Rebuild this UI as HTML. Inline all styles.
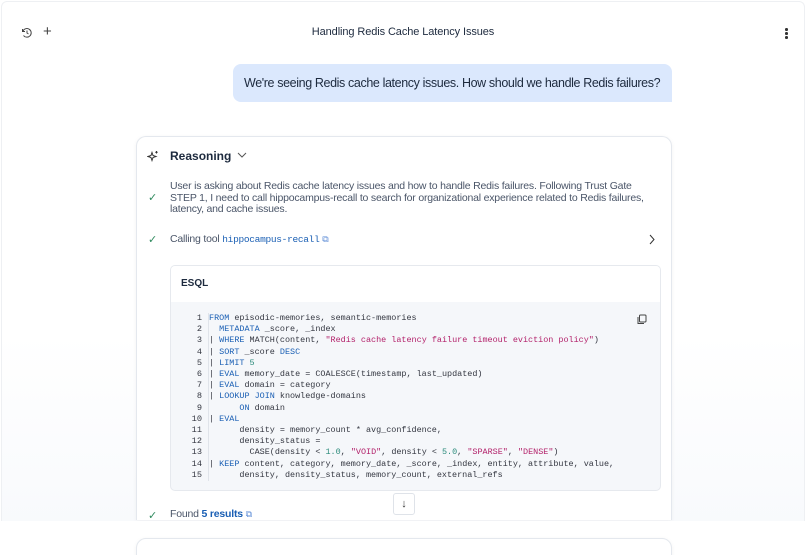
<!DOCTYPE html>
<html><head><meta charset="utf-8"><style>
*{box-sizing:border-box;margin:0;padding:0}
html,body{width:806px;height:555px;overflow:hidden}
body{background:#fff;font-family:"Liberation Sans",sans-serif;color:#1d2a3e;position:relative}
.frame{position:absolute;left:1px;top:1px;right:1px;bottom:0;border:1px solid #eef0f3;border-bottom:none;border-radius:6px 6px 0 0;background:linear-gradient(#fff 0,#fff 60%,#f7f9fc 100%)}
.title{position:absolute;left:0;right:0;top:26px;text-align:center;font-size:11px;color:#1d2a3e;letter-spacing:-0.1px}
.bubble{position:absolute;left:233px;top:64px;width:439px;height:38px;background:#dbe8fd;border-radius:8px 8px 0 8px;font-size:12.5px;line-height:38px;padding-left:11px;color:#1d2a3e;white-space:nowrap;letter-spacing:-0.38px}
.card{position:absolute;left:136px;top:136px;width:536px;height:384px;background:#fff;border:1px solid #e4e8ee;border-bottom:none;border-radius:10px 10px 0 0;box-shadow:0 1px 4px rgba(0,0,0,.05)}
.abs{position:absolute}
.muted{color:#4a5568;font-size:10.5px;line-height:11.5px;letter-spacing:-0.2px}
.check{color:#2f8a5e;font-size:11px}
.code{position:absolute;left:170px;top:265px;width:491px;height:226px;border:1px solid #e6e9ee;border-radius:5px;background:#f5f7fa;overflow:hidden}
.code .hd{height:36px;background:#fff;font-size:10px;font-weight:bold;padding:12px 0 0 10px;color:#1d2a3e}
pre{font-family:"Liberation Mono",monospace;font-size:8.45px;line-height:11.2px;color:#343741;position:absolute;top:47px;left:38px}
.ln{font-family:"Liberation Mono",monospace;font-size:8.6px;line-height:11.2px;color:#343741;position:absolute;top:47px;left:6px;border-right:1px solid #e0e4ea;padding-right:6px;width:32px;text-align:right}
.k{color:#1a5fb4}.s{color:#b3226b}.n{color:#2a8a7a}
.input{position:absolute;left:136px;top:538px;width:536px;height:30px;border:1px solid #e4e8ee;border-radius:10px;background:#fff;box-shadow:0 1px 4px rgba(0,0,0,.05)}
</style></head><body>
<div class="frame"></div>
<svg class="abs" style="left:21px;top:27px" width="12" height="12" viewBox="0 0 12 12" fill="none" stroke="#444" stroke-width="1"><path d="M2.5 8.5A4.3 4.3 0 1 0 2 4"/><path d="M1.5 2v2.5H4"/><path d="M6 3.5V6l1.5 1"/></svg>
<div class="abs" style="left:43px;top:23px;font-size:15px;color:#444">+</div>
<div class="title">Handling Redis Cache Latency Issues</div>
<div class="abs" style="left:785px;top:28px;width:3px">
<div style="width:2.5px;height:2.5px;background:#333;border-radius:50%;margin-bottom:1.5px"></div><div style="width:2.5px;height:2.5px;background:#333;border-radius:50%;margin-bottom:1.5px"></div><div style="width:2.5px;height:2.5px;background:#333;border-radius:50%"></div></div>
<div class="bubble">We're seeing Redis cache latency issues. How should we handle Redis failures?</div>
<div class="card"></div>
<svg class="abs" style="left:147px;top:150px" width="12" height="12" viewBox="0 0 12 12" fill="none" stroke="#333" stroke-width="1"><path d="M5 2.5l1 3 3 1-3 1-1 3-1-3-3-1 3-1z"/><path d="M9.5 1v2.5M8.2 2.2h2.5"/></svg>
<div class="abs" style="left:170px;top:149px;font-size:12px;font-weight:bold;color:#1d2a3e">Reasoning</div>
<svg class="abs" style="left:237px;top:152px" width="10" height="7" viewBox="0 0 10 7" fill="none" stroke="#555"><path d="M1 1l4 4 4-4"/></svg>
<div class="abs check" style="left:148px;top:191px">✓</div>
<div class="abs muted" style="left:170px;top:181px;width:500px">User is asking about Redis cache latency issues and how to handle Redis failures. Following Trust Gate<br>STEP 1, I need to call hippocampus-recall to search for organizational experience related to Redis failures,<br>latency, and cache issues.</div>
<div class="abs check" style="left:148px;top:233px">✓</div>
<div class="abs muted" style="left:170px;top:234px">Calling tool <span style="font-family:'Liberation Mono',monospace;font-size:9.5px;color:#1a5fb4;letter-spacing:-0.3px">hippocampus-recall</span> <span style="color:#5b8bd6;font-size:9px">⧉</span></div>
<svg class="abs" style="left:648px;top:234px" width="8" height="11" viewBox="0 0 8 11" fill="none" stroke="#333"><path d="M2 1l4 4.5L2 10"/></svg>
<div class="code"><div class="hd">ESQL</div>
<div class="ln">1<br>2<br>3<br>4<br>5<br>6<br>7<br>8<br>9<br>10<br>11<br>12<br>13<br>14<br>15</div>
<pre><span class="k">FROM</span> episodic-memories, semantic-memories
  <span class="k">METADATA</span> _score, _index
| <span class="k">WHERE</span> MATCH(content, <span class="s">"Redis cache latency failure timeout eviction policy"</span>)
| <span class="k">SORT</span> _score <span class="k">DESC</span>
| <span class="k">LIMIT</span> <span class="n">5</span>
| <span class="k">EVAL</span> memory_date = COALESCE(timestamp, last_updated)
| <span class="k">EVAL</span> domain = category
| <span class="k">LOOKUP JOIN</span> knowledge-domains
      <span class="k">ON</span> domain
| <span class="k">EVAL</span>
      density = memory_count * avg_confidence,
      density_status =
        CASE(density &lt; <span class="n">1.0</span>, <span class="s">"VOID"</span>, density &lt; <span class="n">5.0</span>, <span class="s">"SPARSE"</span>, <span class="s">"DENSE"</span>)
| <span class="k">KEEP</span> content, category, memory_date, _score, _index, entity, attribute, value,
      density, density_status, memory_count, external_refs</pre>
<svg class="abs" style="left:465px;top:48px" width="11" height="11" viewBox="0 0 11 11" fill="none" stroke="#444"><rect x="3.5" y="1" width="6.5" height="7" rx="1"/><path d="M2 3v6.5h6"/></svg>
</div>
<div class="abs" style="left:393px;top:493px;width:22px;height:22px;border:1px solid #dfe3e9;border-radius:3px;background:#fff;text-align:center;font-size:11px;line-height:20px;color:#333">↓</div>
<div class="abs check" style="left:148px;top:509px">✓</div>
<div class="abs muted" style="left:170px;top:509px">Found <span style="color:#1a5fb4;font-weight:bold">5 results</span> <span style="color:#5b8bd6;font-size:9px">⧉</span></div>
<div class="abs" style="left:0;top:521px;width:806px;height:40px;background:#fff"></div>
<div class="input"></div>
</body></html>
